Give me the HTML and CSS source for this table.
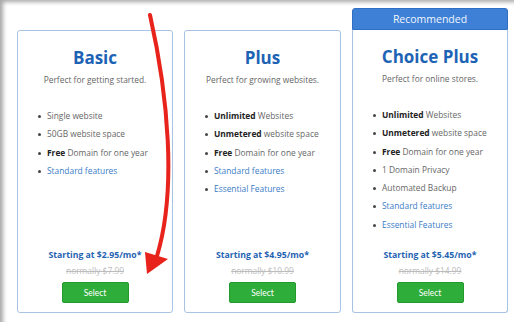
FILE: index.html
```html
<!DOCTYPE html>
<html>
<head>
<meta charset="utf-8">
<link rel="stylesheet" href="styles.css">
</head>
<body>
<div class="frame">
  <div class="plans">
    <div class="plan">
      <div class="card">
        <h2 class="title">Basic</h2>
        <p class="sub">Perfect for getting started.</p>
        <ul class="features">
          <li>Single website</li>
          <li>50GB website space</li>
          <li><b>Free</b> Domain for one year</li>
          <li class="link">Standard features</li>
        </ul>
        <div class="price">
          <div class="start">Starting at $2.95/mo*</div>
          <div class="normal">normally $7.99</div>
          <button class="select">Select</button>
        </div>
      </div>
    </div>
    <div class="plan">
      <div class="card">
        <h2 class="title">Plus</h2>
        <p class="sub">Perfect for growing websites.</p>
        <ul class="features">
          <li><b>Unlimited</b> Websites</li>
          <li><b>Unmetered</b> website space</li>
          <li><b>Free</b> Domain for one year</li>
          <li class="link">Standard features</li>
          <li class="link">Essential Features</li>
        </ul>
        <div class="price">
          <div class="start">Starting at $4.95/mo*</div>
          <div class="normal">normally $10.99</div>
          <button class="select">Select</button>
        </div>
      </div>
    </div>
    <div class="plan">
      <div class="ribbon">Recommended</div>
      <div class="card card-rec">
        <h2 class="title">Choice Plus</h2>
        <p class="sub">Perfect for online stores.</p>
        <ul class="features">
          <li><b>Unlimited</b> Websites</li>
          <li><b>Unmetered</b> website space</li>
          <li><b>Free</b> Domain for one year</li>
          <li>1 Domain Privacy</li>
          <li>Automated Backup</li>
          <li class="link">Standard features</li>
          <li class="link">Essential Features</li>
        </ul>
        <div class="price">
          <div class="start">Starting at $5.45/mo*</div>
          <div class="normal">normally $14.99</div>
          <button class="select">Select</button>
        </div>
      </div>
    </div>
  </div>
  <svg class="arrow" width="514" height="322" viewBox="0 0 514 322">
    <path d="M150,15 C168,95 177,190 157,256" fill="none" stroke="#e8231b" stroke-width="4" stroke-linecap="round"/>
    <polygon points="145,252 168,259 147,274" fill="#e8231b"/>
  </svg>
</div>
</body>
</html>
```

FILE: styles.css
```css
* { box-sizing: border-box; }
html, body { margin: 0; padding: 0; background: #fff; }
body {
  width: 514px;
  height: 322px;
  overflow: hidden;
  font-family: "Open Sans", "DejaVu Sans", sans-serif;
}
.frame {
  position: relative;
  width: 514px;
  height: 322px;
  box-shadow: inset 5px 4px 4px -2px rgba(0,0,0,0.35);
  padding: 8px 0 0 17px;
}
.plans {
  display: grid;
  grid-template-columns: 156px 157px 156px;
  column-gap: 11px;
}
.plan {
  display: flex;
  flex-direction: column;
  justify-content: flex-end;
}
.ribbon {
  height: 22px;
  background: #3d80d6;
  border: 1px solid #2f6ec2;
  border-radius: 3px 3px 0 0;
  color: #f2f7fd;
  font-size: 10.5px;
  line-height: 20px;
  text-align: center;
}
.card {
  height: 283px;
  border: 1px solid #a8c3e3;
  border-radius: 3px;
  display: flex;
  flex-direction: column;
  align-items: stretch;
  padding: 15px 0 9px;
}
.card-rec { border-top: none; border-radius: 0 0 3px 3px; }
.title {
  margin: 0;
  text-align: center;
  font-size: 17px;
  line-height: 24px;
  font-weight: 700;
  color: #1d63b5;
}
.sub {
  margin: 3px 0 0;
  text-align: center;
  font-size: 8.4px;
  line-height: 14px;
  color: #666;
}
.features {
  list-style: none;
  margin: 20px 0 0;
  padding: 0 0 0 29px;
}
.features li {
  position: relative;
  font-size: 8.4px;
  line-height: 18.3px;
  color: #666;
}
.features li::before {
  content: "";
  position: absolute;
  left: -9px;
  top: 8px;
  width: 3px;
  height: 3px;
  border-radius: 50%;
  background: #444;
}
.features b { color: #222; font-weight: 700; }
.features li.link { color: #3a7cc6; }
.price {
  margin-top: auto;
  display: flex;
  flex-direction: column;
  align-items: center;
}
.start {
  font-size: 8.7px;
  font-weight: 700;
  color: #1f63b2;
  line-height: 14px;
}
.normal {
  font-size: 8.4px;
  color: #bcbcbc;
  text-decoration: line-through;
  line-height: 14px;
  margin-top: 2px;
}
.select {
  margin-top: 4px;
  width: 67px;
  height: 21px;
  border: 1px solid #229a2e;
  border-radius: 2px;
  background: #2fad3b;
  color: #fff;
  font-family: "Lato", "Open Sans", sans-serif;
  font-size: 8.5px;
  padding: 0;
}
.arrow {
  position: absolute;
  left: 0;
  top: 0;
  pointer-events: none;
}
```
